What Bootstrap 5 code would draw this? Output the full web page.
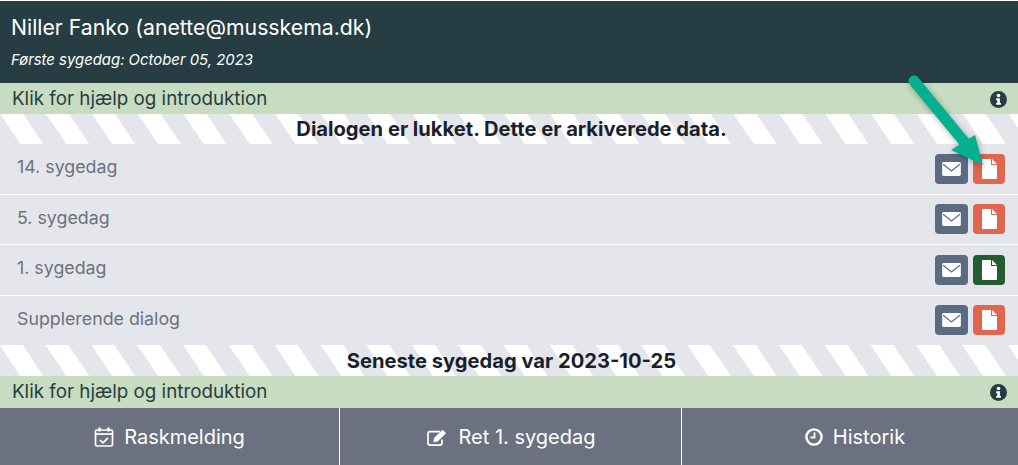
<!DOCTYPE html>
<html lang="en">

<head>
  <meta charset="UTF-8">
  <meta name="viewport" content="width=device-width, initial-scale=1.0">
  <title>Sygedialog</title>
  <link href="https://cdn.jsdelivr.net/npm/bootstrap@5.3.0/dist/css/bootstrap.min.css" rel="stylesheet">
  <style>
    body {
      font-family: Inter, "Liberation Sans", sans-serif;
      background: #fff;
      height: 465px;
      overflow: hidden;
      position: relative;
    }

    .head-box {
      height: 82px;
      margin-top: 1px;
      background: #263e43;
      color: #fff;
      padding: 12px 11px 0;
    }

    .head-name {
      font-size: 21.25px;
      line-height: 28px;
    }

    .head-date {
      font-size: 14.9px;
      font-style: italic;
      line-height: 20px;
      margin-top: 9px;
    }

    .help-bar {
      height: 31px;
      background: #c7dcc0;
      color: #263e43;
      font-size: 18.8px;
      padding: 1px 11px 0 12px;
    }

    .help-tall {
      height: 32px;
    }

    .stripe-bar {
      height: 30px;
      padding-left: 5px;
      font-weight: 700;
      font-size: 20.15px;
      color: #1a1f2b;
      text-align: center;
      line-height: 30px;
      background: repeating-linear-gradient(56deg, #e4e6eb 0 17px, #fff 17px 36px, #e4e6eb 36px 38px);
    }

    .stripe-low {
      height: 31px;
      line-height: 32px;
    }

    .dialog-row {
      height: 50.67px;
      background: #e4e6eb;
      border-bottom: 1px solid #fff;
      color: #6c7280;
      font-size: 17.8px;
      padding: 0 13px 0 17px;
    }

    .dialog-row span {
      margin-top: -3px;
    }

    .dialog-row.last-row {
      height: 49px;
      border-bottom: 0;
    }

    .file-btn {
      width: 32px;
      height: 30px;
      margin-left: 5px;
      border-radius: 4px;
      border: 0;
      padding: 0;
    }

    .btn-mail {
      width: 33px;
      margin-left: 0;
      background: #5c6b82;
    }

    .btn-red { background: #e06650; }
    .btn-green { background: #245e30; }

    .foot-bar {
      height: 57px;
      background: #6b7180;
      color: #fff;
      font-size: 20px;
    }

    .foot-item {
      gap: 10px;
      padding-top: 2px;
    }

    .foot-one { width: 339px; }
    .foot-two { width: 342px; padding-left: 2px; }
    .foot-three { width: 337px; padding-left: 10px; }

    .foot-item + .foot-item {
      border-left: 1px solid #fff;
    }

    .arrow-over {
      position: absolute;
      left: 900px;
      top: 70px;
      pointer-events: none;
      filter: drop-shadow(1px 2px 3px rgba(0, 0, 0, .3));
    }
  </style>
</head>

<body>
  <div class="head-box">
    <div class="head-name">Niller Fanko (anette@musskema.dk)</div>
    <div class="head-date">Første sygedag: October 05, 2023</div>
  </div>

  <div class="help-bar d-flex justify-content-between align-items-center">
    <span>Klik for hjælp og introduktion</span>
    <svg width="17" height="17" viewBox="0 0 16 16">
      <circle cx="8" cy="8" r="8" fill="#263e43"/>
      <circle cx="8" cy="4.2" r="1.7" fill="#fff"/>
      <path d="M5.8 6.9h3.5v4.4h1v1.7H5.8v-1.7h1v-2.7h-1z" fill="#fff"/>
    </svg>
  </div>

  <div class="stripe-bar">Dialogen er lukket. Dette er arkiverede data.</div>

  <div class="dialog-row d-flex justify-content-between align-items-center">
    <span>14. sygedag</span>
    <div class="d-flex">
      <button class="file-btn btn-mail d-flex align-items-center justify-content-center"><svg width="19" height="14" viewBox="0 0 20 15"><rect width="20" height="15" rx="1.5" fill="#fff"/><path d="M1 2.5 10 9.5 19 2.5" fill="none" stroke="#5c6b82" stroke-width="1.3"/></svg></button>
      <button class="file-btn btn-red d-flex align-items-center justify-content-center"><svg width="15" height="20" viewBox="0 0 15 20"><path d="M1 0h8v6h6v13a1 1 0 0 1-1 1H1a1 1 0 0 1-1-1V1a1 1 0 0 1 1-1zM10 0l5 5h-5z" fill="#fff"/></svg></button>
    </div>
  </div>
  <div class="dialog-row d-flex justify-content-between align-items-center">
    <span>5. sygedag</span>
    <div class="d-flex">
      <button class="file-btn btn-mail d-flex align-items-center justify-content-center"><svg width="19" height="14" viewBox="0 0 20 15"><rect width="20" height="15" rx="1.5" fill="#fff"/><path d="M1 2.5 10 9.5 19 2.5" fill="none" stroke="#5c6b82" stroke-width="1.3"/></svg></button>
      <button class="file-btn btn-red d-flex align-items-center justify-content-center"><svg width="15" height="20" viewBox="0 0 15 20"><path d="M1 0h8v6h6v13a1 1 0 0 1-1 1H1a1 1 0 0 1-1-1V1a1 1 0 0 1 1-1zM10 0l5 5h-5z" fill="#fff"/></svg></button>
    </div>
  </div>
  <div class="dialog-row d-flex justify-content-between align-items-center">
    <span>1. sygedag</span>
    <div class="d-flex">
      <button class="file-btn btn-mail d-flex align-items-center justify-content-center"><svg width="19" height="14" viewBox="0 0 20 15"><rect width="20" height="15" rx="1.5" fill="#fff"/><path d="M1 2.5 10 9.5 19 2.5" fill="none" stroke="#5c6b82" stroke-width="1.3"/></svg></button>
      <button class="file-btn btn-green d-flex align-items-center justify-content-center"><svg width="15" height="20" viewBox="0 0 15 20"><path d="M1 0h8v6h6v13a1 1 0 0 1-1 1H1a1 1 0 0 1-1-1V1a1 1 0 0 1 1-1zM10 0l5 5h-5z" fill="#fff"/></svg></button>
    </div>
  </div>
  <div class="dialog-row last-row d-flex justify-content-between align-items-center">
    <span>Supplerende dialog</span>
    <div class="d-flex">
      <button class="file-btn btn-mail d-flex align-items-center justify-content-center"><svg width="19" height="14" viewBox="0 0 20 15"><rect width="20" height="15" rx="1.5" fill="#fff"/><path d="M1 2.5 10 9.5 19 2.5" fill="none" stroke="#5c6b82" stroke-width="1.3"/></svg></button>
      <button class="file-btn btn-red d-flex align-items-center justify-content-center"><svg width="15" height="20" viewBox="0 0 15 20"><path d="M1 0h8v6h6v13a1 1 0 0 1-1 1H1a1 1 0 0 1-1-1V1a1 1 0 0 1 1-1zM10 0l5 5h-5z" fill="#fff"/></svg></button>
    </div>
  </div>

  <div class="stripe-bar stripe-low">Seneste sygedag var 2023-10-25</div>

  <div class="help-bar help-tall d-flex justify-content-between align-items-center">
    <span>Klik for hjælp og introduktion</span>
    <svg width="17" height="17" viewBox="0 0 16 16">
      <circle cx="8" cy="8" r="8" fill="#263e43"/>
      <circle cx="8" cy="4.2" r="1.7" fill="#fff"/>
      <path d="M5.8 6.9h3.5v4.4h1v1.7H5.8v-1.7h1v-2.7h-1z" fill="#fff"/>
    </svg>
  </div>

  <div class="foot-bar d-flex">
    <div class="foot-item foot-one d-flex align-items-center justify-content-center">
      <svg width="20" height="20" viewBox="0 0 20 20" fill="none" stroke="#fff" stroke-width="1.7"><rect x="1.5" y="3" width="17" height="16" rx="1.5"/><path d="M1.5 7h17" /><path d="M5.5 .5v4M14.5 .5v4" stroke-width="2.4"/><path d="M6 13l3 2.8 5-5"/></svg>
      <span>Raskmelding</span>
    </div>
    <div class="foot-item foot-two d-flex align-items-center justify-content-center">
      <svg width="21" height="17" viewBox="0 0 21 17" fill="none" stroke="#fff" stroke-width="1.7"><path d="M15 10.5v3.6a2 2 0 0 1-2 2H3a2 2 0 0 1-2-2V4.6a2 2 0 0 1 2-2h10"/><path d="M7 9 15.5 .8l3.6 3.4-8.5 8.4-4.1.6z" fill="#fff" stroke="none"/></svg>
      <span>Ret 1. sygedag</span>
    </div>
    <div class="foot-item foot-three d-flex align-items-center justify-content-center">
      <svg width="18" height="18" viewBox="0 0 18 18" fill="none" stroke="#fff" stroke-width="2.4"><circle cx="9" cy="9" r="7.6"/><path d="M9.5 4.5v5H5.5" stroke-width="1.8"/></svg>
      <span>Historik</span>
    </div>
  </div>

  <!-- green arrow pointing at the first document button -->
  <svg class="arrow-over" width="100" height="100" viewBox="0 0 100 100">
    <path d="M14 11 L66 74" stroke="#04b08f" stroke-width="11" stroke-linecap="round" fill="none"/>
    <path d="M51 80 L75 65 L83 95 Z" fill="#04b08f"/>
  </svg>
</body>

</html>
